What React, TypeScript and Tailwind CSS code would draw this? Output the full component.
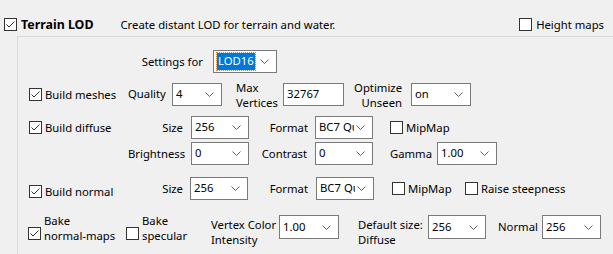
import React from 'react';

// WinForms-style terrain LOD settings panel

function Check({ checked = false }: { checked?: boolean }) {
  return (
    <span className="inline-flex w-[13px] h-[13px] shrink-0 border border-[#333333] bg-white items-center justify-center">
      {checked && (
        <svg width="11" height="11" viewBox="0 0 11 11">
          <polyline points="1.5,5.5 4,8 9.5,2.5" fill="none" stroke="#333333" strokeWidth="1" />
        </svg>
      )}
    </span>
  );
}

function Chevron() {
  return (
    <svg width="9" height="5" viewBox="0 0 9 5" className="shrink-0">
      <polyline points="0.5,0.5 4.5,4.5 8.5,0.5" fill="none" stroke="#606060" strokeWidth="1" />
    </svg>
  );
}

function Select({ value, w, h = 23, selected = false }: { value: string; w: string; h?: number; selected?: boolean }) {
  return (
    <div
      className={`${w} flex items-center gap-[2px] bg-white border border-[#7a7a7a] pl-[3px] pr-[7px] shrink-0 overflow-hidden`}
      style={{ height: h }}
    >
      {selected ? (
        <span className="bg-[#0078d7] text-white px-[1px] h-[17px] flex items-center outline outline-1 outline-dotted outline-[#e08020]">
          {value}
        </span>
      ) : (
        <span className="flex-1 whitespace-nowrap overflow-hidden">{value}</span>
      )}
      <span className="ml-auto flex">
        <Chevron />
      </span>
    </div>
  );
}

function CheckLabel({ text, checked, w }: { text: React.ReactNode; checked?: boolean; w?: string }) {
  return (
    <div className={`${w ?? ''} flex items-center gap-[3px] shrink-0`}>
      <Check checked={checked} />
      <span className="whitespace-nowrap leading-[15px]">{text}</span>
    </div>
  );
}

function Label({ text, w, pr }: { text: React.ReactNode; w: string; pr: string }) {
  return <div className={`${w} ${pr} text-right shrink-0 leading-[15px] whitespace-nowrap`}>{text}</div>;
}

export default function App() {
  return (
    <div
      className="w-[613px] h-[254px] bg-[#f0f0f0] text-[11.3px] text-black overflow-hidden"
      style={{ fontFamily: '"Segoe UI", "Noto Sans", Arial, sans-serif' }}
    >
      {/* header */}
      <div className="h-[36px] flex items-start pt-[18px] pl-[4px]">
        <div className="flex items-center gap-[4px]">
          <Check checked />
          <span className="font-bold text-[12.4px] leading-[13px]">Terrain LOD</span>
        </div>
        <span className="ml-[27px] leading-[13px]">Create distant LOD for terrain and water.</span>
        <div className="ml-auto mr-[9px] flex items-center gap-[4px]">
          <Check />
          <span className="leading-[13px]">Height maps</span>
        </div>
      </div>

      {/* panel */}
      <div className="ml-[17px] h-[218px] border-l border-t border-[#dadada]">
        <div className="flex items-center mt-[13px] h-[23px]">
          <Label text="Settings for" w="w-[195px]" pr="pr-[10px]" />
          <Select value="LOD16" w="w-[64px]" selected />
        </div>

        <div className="flex items-center mt-[10px] h-[23px] pl-[11px]">
          <CheckLabel text="Build meshes" checked w="w-[99px]" />
          <div className="w-[44px] shrink-0">Quality</div>
          <Select value="4" w="w-[50px]" />
          <div className="w-[47px] ml-[14px] shrink-0 leading-[15px] whitespace-nowrap">
            Max
            <br />
            Vertices
          </div>
          <div className="w-[61px] h-[23px] bg-white border border-[#7a7a7a] pl-[3px] flex items-center shrink-0">32767</div>
          <Label text={<>Optimize<br />Unseen</>} w="w-[67px]" pr="pr-[9px]" />
          <Select value="on" w="w-[60px]" />
        </div>

        <div className="flex items-center mt-[10px] h-[23px] pl-[11px]">
          <CheckLabel text="Build diffuse" checked w="w-[99px]" />
          <Label text="Size" w="w-[63px]" pr="pr-[8px]" />
          <Select value="256" w="w-[58px]" />
          <Label text="Format" w="w-[66px]" pr="pr-[7px]" />
          <Select value="BC7 Quality" w="w-[58px]" />
          <div className="ml-[17px]">
            <CheckLabel text="MipMap" />
          </div>
        </div>

        <div className="flex items-center mt-[3px] h-[23px] pl-[11px]">
          <div className="w-[99px] shrink-0" />
          <Label text="Brightness" w="w-[63px]" pr="pr-[8px]" />
          <Select value="0" w="w-[58px]" />
          <Label text="Contrast" w="w-[66px]" pr="pr-[8px]" />
          <Select value="0" w="w-[58px]" />
          <Label text="Gamma" w="w-[64px]" pr="pr-[5px]" />
          <Select value="1.00" w="w-[60px]" />
        </div>

        <div className="flex items-center mt-[12px] h-[23px] pl-[11px]">
          <div className="w-[99px] shrink-0 pt-[5px]">
            <CheckLabel text="Build normal" checked />
          </div>
          <Label text="Size" w="w-[62px]" pr="pr-[7px]" />
          <Select value="256" w="w-[58px]" />
          <Label text="Format" w="w-[68px]" pr="pr-[8px]" />
          <Select value="BC7 Quality" w="w-[58px]" />
          <div className="ml-[18px] w-[73px] shrink-0">
            <CheckLabel text="MipMap" />
          </div>
          <CheckLabel text="Raise steepness" />
        </div>

        <div className="flex items-center mt-[15px] h-[24px] pl-[10px]">
          <div className="w-[98px] flex items-center gap-[3px] shrink-0 pt-[12px]">
            <Check checked />
            <span className="leading-[15px] -mt-[10px] whitespace-nowrap">
              Bake
              <br />
              normal-maps
            </span>
          </div>
          <div className="w-[85px] flex items-center gap-[3px] shrink-0 pt-[12px]">
            <Check />
            <span className="leading-[15px] -mt-[10px] whitespace-nowrap">
              Bake
              <br />
              specular
            </span>
          </div>
          <div className="w-[68px] shrink-0 leading-[15px] pt-[10px] whitespace-nowrap">
            Vertex Color
            <br />
            Intensity
          </div>
          <Select value="1.00" w="w-[60px]" h={24} />
          <div className="w-[89px] pl-[19px] shrink-0 leading-[15px] pt-[10px] whitespace-nowrap">
            Default size:
            <br />
            Diffuse
          </div>
          <Select value="256" w="w-[58px]" h={24} />
          <div className="w-[56px] pl-[12px] shrink-0">Normal</div>
          <Select value="256" w="w-[59px]" h={24} />
        </div>
      </div>
    </div>
  );
}
